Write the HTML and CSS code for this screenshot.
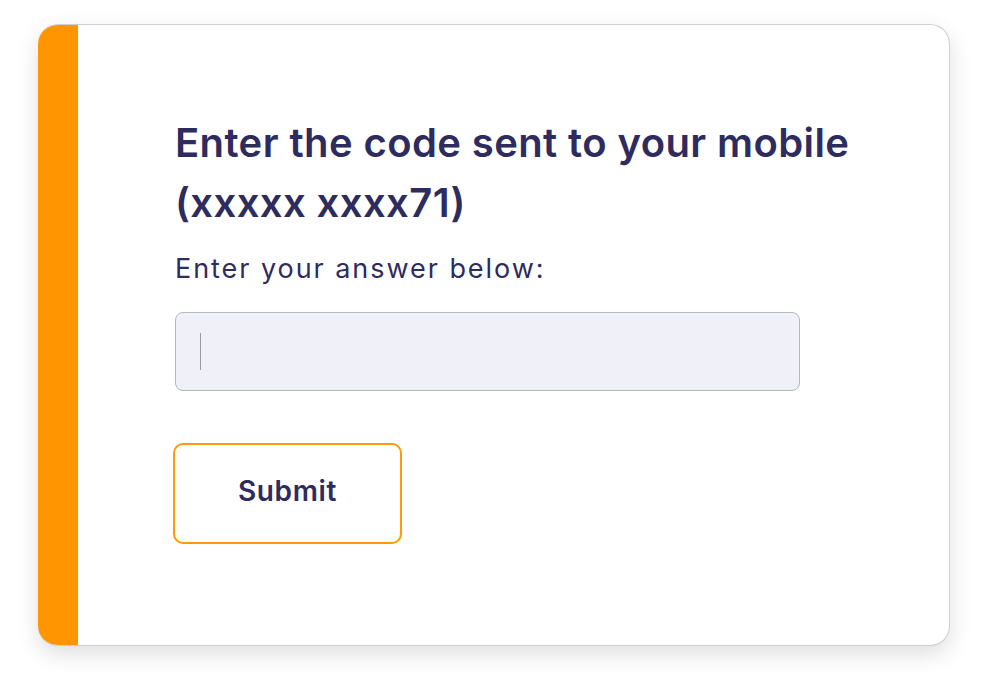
FILE: index.html
```html
<!DOCTYPE html>
<html lang="en">
<head>
<meta charset="utf-8">
<title>Verify code</title>
<link rel="stylesheet" href="styles.css">
</head>
<body>
<div class="page">
  <div class="card">
    <div class="accent"></div>
    <form class="content" onsubmit="return false;">
      <h1 class="title">Enter the code sent to your mobile (xxxxx xxxx71)</h1>
      <label class="label" for="code">Enter your answer below:</label>
      <div class="field"><span class="caret"></span></div>
      <button class="submit" type="button">Submit</button>
    </form>
  </div>
</div>
</body>
</html>
```
FILE: styles.css
```css
html, body {
  margin: 0;
  padding: 0;
  background: #ffffff;
}
.page {
  padding: 24px 38px 51px 38px;
  font-family: "Inter", "Liberation Sans", sans-serif;
  color: #2e2c5f;
}
.card {
  box-sizing: border-box;
  width: 912px;
  height: 622px;
  display: flex;
  background: #ffffff;
  border: 1px solid #cfcfd2;
  border-left: none;
  border-radius: 20px;
  overflow: hidden;
  box-shadow: 0 8px 22px rgba(0, 0, 0, 0.13);
}
.accent {
  width: 40px;
  flex: 0 0 40px;
  background: #ff9500;
}
.content {
  flex: 1;
  padding: 88px 0 0 97px;
  display: flex;
  flex-direction: column;
  align-items: flex-start;
}
.title {
  margin: 0;
  width: 720px;
  font-size: 40px;
  line-height: 60px;
  font-weight: 600;
  letter-spacing: 0.4px;
}
.label {
  margin-top: 18px;
  font-size: 27px;
  line-height: 36px;
  letter-spacing: 1.95px;
  font-weight: 400;
}
.field {
  box-sizing: border-box;
  margin-top: 25px;
  width: 625px;
  height: 79px;
  background: #eff0f8;
  border: 1px solid #b6b6bd;
  border-radius: 8px;
  display: flex;
  align-items: center;
  padding-left: 24px;
}
.caret {
  width: 1px;
  height: 37px;
  background: #9a9aa2;
}
.submit {
  box-sizing: border-box;
  margin-top: 52px;
  margin-left: -2px;
  width: 229px;
  height: 101px;
  padding: 0 0 6px 0;
  background: #ffffff;
  border: 2px solid #ff9a0a;
  border-radius: 10px;
  font-family: "Inter", "Liberation Sans", sans-serif;
  font-size: 28px;
  font-weight: 600;
  letter-spacing: 0.6px;
  color: #2e2c5f;
  cursor: pointer;
}
```
